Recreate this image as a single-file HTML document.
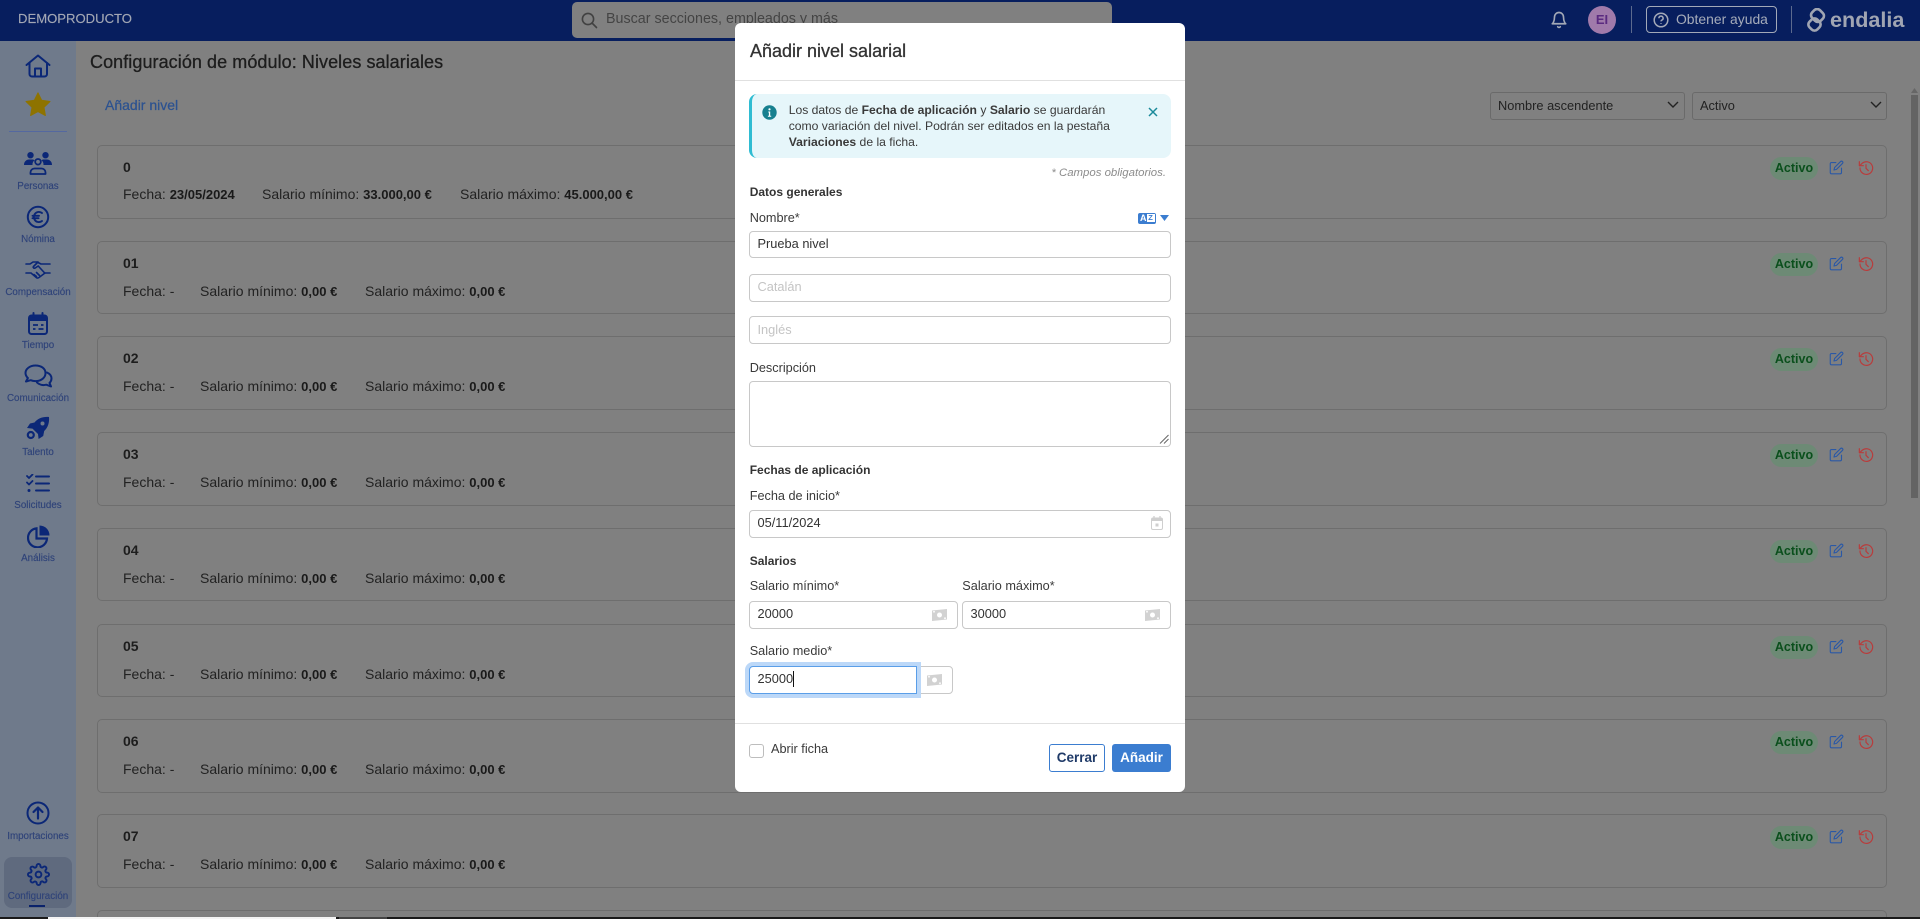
<!DOCTYPE html>
<html lang="es"><head><meta charset="utf-8"><title>Niveles salariales</title>
<style>
*{box-sizing:border-box}
html,body{margin:0;padding:0;width:1920px;height:919px;overflow:hidden;background:#808080;font-family:"Liberation Sans",sans-serif;color:#222}
#root{position:relative;width:1920px;height:919px;overflow:hidden;background:#808080}
.a{position:absolute}
.t{position:absolute;white-space:nowrap;line-height:18px;height:18px}
#hd{left:0;top:0;width:1920px;height:41px;background:#071e5e}
#sb{left:0;top:41px;width:76px;height:876px;background:#6f7a8b}
.ic{position:absolute;left:0;width:76px;display:flex;justify-content:center;align-items:center}
.lb{position:absolute;left:0;width:76px;text-align:center;font-size:9.8px;line-height:12px;color:#2f4379;white-space:nowrap;-webkit-text-stroke:.15px #2f4379;margin-top:1px}
.card{position:absolute;left:97px;width:1789.5px;height:73.7px;border:1px solid #6e6e6e;border-radius:5px}
.card .n{position:absolute;left:25px;top:13px;font-size:14px;font-weight:bold;line-height:16px;color:#1d1d1d}
.card .r{position:absolute;top:40px;font-size:14px;line-height:18px;color:#222;white-space:nowrap}
.card b{font-size:13px;color:#1a1a1a}
.pill{position:absolute;left:1672px;top:11px;width:48px;height:23px;border-radius:12px;background:#6d8a75;color:#0a4f1c;font-size:12.5px;font-weight:bold;line-height:23px;text-align:center}
.card svg{position:absolute;fill:none;stroke-width:1.8;stroke-linecap:round;stroke-linejoin:round}
.e{left:1731px;top:14px;stroke:#2a58a6}.h{left:1760px;top:14px;stroke:#b83c3c}
.sel{position:absolute;top:92.3px;height:27.4px;border:1px solid #6a6a6a;border-radius:3px;font-size:12.8px;line-height:25px;padding-left:7px;color:#222;white-space:nowrap}
.sel svg{position:absolute;top:8px;fill:none;stroke:#222;stroke-width:1.4}
#m{position:absolute;left:735px;top:23px;width:450px;height:769px;background:#fff;border-radius:6px}
.inp{position:absolute;height:27.4px;background:#fff;border:1px solid #c8c8c8;border-radius:4px;font-size:12.8px;line-height:24.5px;padding-left:7.5px;color:#333;white-space:nowrap}
.ph{color:#c4c4c4}
.lab{position:absolute;font-size:12.7px;line-height:16px;color:#3a3a3a;white-space:nowrap}
.sec{position:absolute;font-size:12px;font-weight:bold;line-height:16px;color:#333;white-space:nowrap}
</style></head><body>
<div id="root">

<div class="a" id="hd"></div>
<div class="t" style="left:18px;top:10px;font-size:13.1px;color:#a2a7b4;-webkit-text-stroke:.15px #a2a7b4">DEMOPRODUCTO</div>
<div class="a" style="left:572px;top:2px;width:540px;height:36px;background:#808080;border-radius:5px"></div>
<svg class="a" style="left:580px;top:11px" width="18" height="18" viewBox="0 0 18 18" fill="none" stroke="#414141" stroke-width="1.6"><circle cx="8" cy="8" r="5.6"/><path d="M12 12l4.500 4.500" stroke-linecap="round"/></svg>
<div class="t" style="left:606px;top:10px;font-size:14.3px;color:#444">Buscar secciones, empleados y más</div>

<svg class="a" style="left:1550px;top:10px" width="18" height="20" viewBox="0 0 24 24" fill="none" stroke="#a2a8b6" stroke-width="2.2" stroke-linecap="round" stroke-linejoin="round"><path d="M18 8A6 6 0 0 0 6 8c0 7-3 9-3 9h18s-3-2-3-9"/><path d="M13.700 21a2 2 0 0 1-3.400 0"/></svg>
<div class="a" style="left:1588px;top:6px;width:28px;height:28px;border-radius:50%;background:#a07aaa;color:#5a2a80;font-size:13px;font-weight:bold;line-height:28px;text-align:center">EI</div>
<div class="a" style="left:1631px;top:6px;width:1px;height:27px;background:#5c6a8e"></div>
<div class="a" style="left:1646px;top:6px;width:131px;height:27px;border:1px solid #a3a9b8;border-radius:4px"></div>
<svg class="a" style="left:1653px;top:12px" width="16" height="16" viewBox="0 0 16 16" fill="none" stroke="#a3a9b8" stroke-width="1.5"><circle cx="8" cy="8" r="6.800"/><path d="M5.900 6.200a2.100 2.100 0 1 1 3 1.900c-.6.300-.9.700-.9 1.300"/><path d="M8 11.200v.8"/></svg>
<div class="t" style="left:1676px;top:10px;font-size:13.9px;color:#a6acba">Obtener ayuda</div>
<div class="a" style="left:1791px;top:6px;width:1px;height:27px;background:#5c6a8e"></div>
<svg class="a" style="left:1806px;top:8px" width="24" height="24" viewBox="0 0 24 24" fill="none" stroke="#a0a5b2" stroke-width="2.600"><rect x="5.500" y="2" width="12" height="11" rx="4" transform="rotate(45 11.500 7.500)"/><rect x="3" y="11" width="11" height="11" rx="4" transform="rotate(45 8.500 16.500)"/></svg>
<div class="t" style="left:1830px;top:7px;height:26px;line-height:26px;font-size:21.600px;font-weight:bold;color:#a0a5b2">endalia</div>

<div class="a" id="sb"></div>
<div class="a" style="left:9px;top:131px;width:58px;height:1px;background:#5468a0"></div>
<div class="a" style="left:4px;top:857px;width:68px;height:51px;background:#5f6a7e;border-radius:8px"></div>
<div class="a" style="left:29px;top:905px;width:16px;height:2px;background:#0a226b"></div>

<div class="ic" style="top:53px;height:26px"><svg width="26" height="24" viewBox="0 0 26 24" fill="none" stroke="#0b2777" stroke-width="2" stroke-linejoin="round" stroke-linecap="round"><path d="M1.500 11 13 1.500 24.500 11"/><path d="M4.500 9v11a2.500 2.500 0 0 0 2.500 2.500h12.500a2.500 2.500 0 0 0 2.500-2.500V9"/><path d="M10 22.500V14.500h6v8"/></svg></div>
<div class="ic" style="top:92px;height:24px"><svg width="26" height="24" viewBox="0 0 26 24"><path d="M13 .8l3.700 7.500 8.300 1.200-6 5.800 1.400 8.200-7.400-3.900-7.400 3.900 1.400-8.200-6-5.800 8.300-1.200z" fill="#8e7300" stroke="#8e7300" stroke-linejoin="round"/></svg></div>

<div class="ic" style="top:150px;height:26px"><svg width="28" height="23" viewBox="0 0 28 23"><circle cx="6.500" cy="3.200" r="3.200" fill="#0b2777"/><circle cx="21.500" cy="3.200" r="3.200" fill="#0b2777"/><path d="M0 13c0-3.500 2.400-5.500 5-5.500h3c1 0 1.800.2 2.500.8C9.200 9.300 8.300 11 8.500 13zM28 13c0-3.500-2.400-5.500-5-5.500h-3c-1 0-1.800.2-2.500.8 1.300 1 2.200 2.700 2 4.700z" fill="#0b2777"/><circle cx="14" cy="9.800" r="2.800" fill="none" stroke="#0b2777" stroke-width="1.800"/><path d="M6.500 22v-1.500c0-2.400 1.800-4 4-4h7c2.200 0 4 1.600 4 4V22z" fill="none" stroke="#0b2777" stroke-width="1.800" stroke-linejoin="round"/></svg></div>
<div class="lb" style="top:180px">Personas</div>

<div class="ic" style="top:205px;height:24px"><svg width="24" height="24" viewBox="0 0 24 24"><circle cx="12" cy="12" r="10.200" fill="none" stroke="#0b2777" stroke-width="2"/><path d="M16 8a5 5 0 0 0-7.500 1.500 5.500 5.500 0 0 0 0 5A5 5 0 0 0 16 16M6.500 10.800h6.500M6.500 13.200h6" fill="none" stroke="#0b2777" stroke-width="1.900" stroke-linecap="round"/></svg></div>
<div class="lb" style="top:233px">Nómina</div>

<div class="ic" style="top:259px;height:20px"><svg width="26" height="19" viewBox="0 0 26 19" fill="none" stroke="#0b2777" stroke-width="1.600" stroke-linecap="round" stroke-linejoin="round"><path d="M1 4h4l3-2h4l4 2h9"/><path d="M25 13h-5l-6 4.500c-1 .7-2.200.6-3-.2L6 13H1"/><path d="M13 2 8.500 6.500c-.8.900.6 2.200 1.700 1.500l3-2 6.500 7"/><path d="M9 14.500l2.500 2M11.500 12.500l3 3"/></svg></div>
<div class="lb" style="top:286px">Compensación</div>

<div class="ic" style="top:311px;height:24px"><svg width="22" height="23" viewBox="0 0 22 23"><rect x="2" y="3.500" width="18" height="18.500" rx="2.500" fill="none" stroke="#0b2777" stroke-width="2"/><path d="M2 5.500a2.500 2.500 0 0 1 2.500-2.500h13A2.500 2.500 0 0 1 20 5.500V9H2z" fill="#0b2777"/><path d="M6.500 1v4M15.500 1v4" stroke="#0b2777" stroke-width="2" stroke-linecap="round"/><path d="M6 13h5M14 13h2.500M6 17h2.500M11.500 17h5" stroke="#0b2777" stroke-width="1.800"/></svg></div>
<div class="lb" style="top:339px">Tiempo</div>

<div class="ic" style="top:363px;height:26px"><svg width="29" height="24" viewBox="0 0 29 24" fill="none" stroke="#0b2777" stroke-width="2" stroke-linejoin="round" stroke-linecap="round"><path d="M11.500 1.500C5.800 1.500 1.500 5 1.500 9c0 1.900.9 3.600 2.400 5L2 17.500l4.700-1.300c1.400.6 3 .9 4.800.9 5.700 0 10-3.500 10-8s-4.300-7.600-10-7.600z"/><path d="M23 8.500c2.700 1.200 4.500 3.300 4.500 6 0 1.700-.7 3.200-2 4.400l1.500 3.600-4.700-1.800c-3.300.9-7.200.1-9.300-2.200"/></svg></div>
<div class="lb" style="top:392px">Comunicación</div>

<div class="ic" style="top:416px;height:24px"><svg width="24" height="24" viewBox="0 0 24 24"><path d="M23 1c-6-.5-11 1.200-14.500 5.500L4 7.500 1 12l5.500.6 5.500 5.400.6 5 4.600-3 1-5C22 11.500 23.500 6.500 23 1z" fill="#0b2777"/><circle cx="16.500" cy="7.500" r="2" fill="#6f7a8b"/><circle cx="4.800" cy="19" r="3" fill="none" stroke="#0b2777" stroke-width="2.200"/></svg></div>
<div class="lb" style="top:446px">Talento</div>

<div class="ic" style="top:473px;height:20px"><svg width="24" height="19" viewBox="0 0 24 19" fill="none" stroke="#0b2777" stroke-linecap="round" stroke-linejoin="round"><path d="M10 2.500h13M10 9.500h13M10 16.500h13" stroke-width="2"/><path d="M1 2l2 2 3.500-3.500M1 8.500l2 2 3.500-3.500" stroke-width="1.800"/><circle cx="3" cy="16.500" r="1" fill="#0b2777" stroke-width="1"/></svg></div>
<div class="lb" style="top:498.500px">Solicitudes</div>

<div class="ic" style="top:524px;height:24px"><svg width="23" height="23" viewBox="0 0 23 23"><path d="M9.500 3.400A9.500 9.500 0 1 0 20 13.500h-10.500z" fill="none" stroke="#0b2777" stroke-width="2.200"/><path d="M12.500 0.500A10 10 0 0 1 22.500 10.500H12.500z" fill="#0b2777"/></svg></div>
<div class="lb" style="top:552px">Análisis</div>

<div class="ic" style="top:801px;height:24px"><svg width="24" height="24" viewBox="0 0 24 24" fill="none" stroke="#0b2777" stroke-width="2" stroke-linecap="round" stroke-linejoin="round"><circle cx="12" cy="12" r="10.500"/><path d="M12 17.500v-11M7.500 11l4.500-4.500 4.500 4.500" stroke-width="2.200"/></svg></div>
<div class="lb" style="top:830px">Importaciones</div>

<div class="ic" style="top:862px;height:24px"><svg width="23" height="23" viewBox="0 0 24 24" fill="none" stroke="#0b2777" stroke-width="2" stroke-linecap="round" stroke-linejoin="round"><circle cx="12" cy="12" r="3"/><path d="M19.400 15a1.650 1.650 0 0 0 .33 1.820l.06.06a2 2 0 0 1 0 2.830 2 2 0 0 1-2.830 0l-.06-.06a1.650 1.650 0 0 0-1.820-.33 1.650 1.650 0 0 0-1 1.510V21a2 2 0 0 1-2 2 2 2 0 0 1-2-2v-.09A1.650 1.650 0 0 0 9 19.400a1.650 1.650 0 0 0-1.820.33l-.06.06a2 2 0 0 1-2.830 0 2 2 0 0 1 0-2.830l.06-.06a1.650 1.650 0 0 0 .33-1.820 1.650 1.650 0 0 0-1.510-1H3a2 2 0 0 1-2-2 2 2 0 0 1 2-2h.09A1.650 1.650 0 0 0 4.600 9a1.650 1.650 0 0 0-.33-1.820l-.06-.06a2 2 0 0 1 0-2.830 2 2 0 0 1 2.830 0l.06.06a1.650 1.650 0 0 0 1.820.33H9a1.650 1.650 0 0 0 1-1.510V3a2 2 0 0 1 2-2 2 2 0 0 1 2 2v.09a1.650 1.650 0 0 0 1 1.510 1.650 1.650 0 0 0 1.820-.33l.06-.06a2 2 0 0 1 2.830 0 2 2 0 0 1 0 2.830l-.06.06a1.650 1.650 0 0 0-.33 1.820V9a1.650 1.650 0 0 0 1.510 1H21a2 2 0 0 1 2 2 2 2 0 0 1-2 2h-.09a1.650 1.650 0 0 0-1.510 1z"/></svg></div>
<div class="lb" style="top:890px">Configuración</div>

<div class="t" style="left:90px;top:52px;font-size:18px;line-height:20px;height:20px;color:#1d1d1d;-webkit-text-stroke:.3px #1d1d1d;letter-spacing:.07px">Configuración de módulo: Niveles salariales</div>
<div class="t" style="left:105px;top:96px;font-size:14px;color:#2c5290;-webkit-text-stroke:.25px #2c5290">Añadir nivel</div>

<div class="sel" style="left:1490px;width:195px">Nombre ascendente<svg style="left:176px" width="12" height="8" viewBox="0 0 12 8"><path d="M1 1l5 5 5-5"/></svg></div>
<div class="sel" style="left:1692px;width:195px">Activo<svg style="left:177px" width="12" height="8" viewBox="0 0 12 8"><path d="M1 1l5 5 5-5"/></svg></div>

<div class="card" style="top:145px"><div class="n">0</div><div class="r" style="left:25px;top:39px">Fecha: <b>23/05/2024</b></div><div class="r" style="left:164px;top:39px">Salario mínimo: <b>33.000,00 €</b></div><div class="r" style="left:362px;top:39px">Salario máximo: <b>45.000,00 €</b></div><div class="pill">Activo</div><svg class="e" width="15" height="15" viewBox="0 0 24 24"><path d="M11 4H4a2 2 0 0 0-2 2v14a2 2 0 0 0 2 2h14a2 2 0 0 0 2-2v-7"/><path d="M18.500 2.500a2.120 2.120 0 0 1 3 3L12 15l-4 1 1-4z"/></svg><svg class="h" width="16" height="16" viewBox="0 0 24 24"><path d="M3 12a9.500 9.500 0 1 0 3.200-7L2.500 8.500"/><path d="M2 2.500v6h6"/><path d="M12 7v5.500l3.500 3.500"/></svg></div>
<div class="card" style="top:240.700px"><div class="n">01</div><div class="r" style="left:25px">Fecha: -</div><div class="r" style="left:102px">Salario mínimo: <b>0,00 €</b></div><div class="r" style="left:267px">Salario máximo: <b>0,00 €</b></div><div class="pill">Activo</div><svg class="e" width="15" height="15" viewBox="0 0 24 24"><path d="M11 4H4a2 2 0 0 0-2 2v14a2 2 0 0 0 2 2h14a2 2 0 0 0 2-2v-7"/><path d="M18.500 2.500a2.120 2.120 0 0 1 3 3L12 15l-4 1 1-4z"/></svg><svg class="h" width="16" height="16" viewBox="0 0 24 24"><path d="M3 12a9.500 9.500 0 1 0 3.200-7L2.500 8.500"/><path d="M2 2.500v6h6"/><path d="M12 7v5.500l3.500 3.500"/></svg></div>
<div class="card" style="top:336.400px"><div class="n">02</div><div class="r" style="left:25px">Fecha: -</div><div class="r" style="left:102px">Salario mínimo: <b>0,00 €</b></div><div class="r" style="left:267px">Salario máximo: <b>0,00 €</b></div><div class="pill">Activo</div><svg class="e" width="15" height="15" viewBox="0 0 24 24"><path d="M11 4H4a2 2 0 0 0-2 2v14a2 2 0 0 0 2 2h14a2 2 0 0 0 2-2v-7"/><path d="M18.500 2.500a2.120 2.120 0 0 1 3 3L12 15l-4 1 1-4z"/></svg><svg class="h" width="16" height="16" viewBox="0 0 24 24"><path d="M3 12a9.500 9.500 0 1 0 3.200-7L2.500 8.500"/><path d="M2 2.500v6h6"/><path d="M12 7v5.500l3.500 3.500"/></svg></div>
<div class="card" style="top:432.100px"><div class="n">03</div><div class="r" style="left:25px">Fecha: -</div><div class="r" style="left:102px">Salario mínimo: <b>0,00 €</b></div><div class="r" style="left:267px">Salario máximo: <b>0,00 €</b></div><div class="pill">Activo</div><svg class="e" width="15" height="15" viewBox="0 0 24 24"><path d="M11 4H4a2 2 0 0 0-2 2v14a2 2 0 0 0 2 2h14a2 2 0 0 0 2-2v-7"/><path d="M18.500 2.500a2.120 2.120 0 0 1 3 3L12 15l-4 1 1-4z"/></svg><svg class="h" width="16" height="16" viewBox="0 0 24 24"><path d="M3 12a9.500 9.500 0 1 0 3.200-7L2.500 8.500"/><path d="M2 2.500v6h6"/><path d="M12 7v5.500l3.500 3.500"/></svg></div>
<div class="card" style="top:527.800px"><div class="n">04</div><div class="r" style="left:25px">Fecha: -</div><div class="r" style="left:102px">Salario mínimo: <b>0,00 €</b></div><div class="r" style="left:267px">Salario máximo: <b>0,00 €</b></div><div class="pill">Activo</div><svg class="e" width="15" height="15" viewBox="0 0 24 24"><path d="M11 4H4a2 2 0 0 0-2 2v14a2 2 0 0 0 2 2h14a2 2 0 0 0 2-2v-7"/><path d="M18.500 2.500a2.120 2.120 0 0 1 3 3L12 15l-4 1 1-4z"/></svg><svg class="h" width="16" height="16" viewBox="0 0 24 24"><path d="M3 12a9.500 9.500 0 1 0 3.200-7L2.500 8.500"/><path d="M2 2.500v6h6"/><path d="M12 7v5.500l3.500 3.500"/></svg></div>
<div class="card" style="top:623.500px"><div class="n">05</div><div class="r" style="left:25px">Fecha: -</div><div class="r" style="left:102px">Salario mínimo: <b>0,00 €</b></div><div class="r" style="left:267px">Salario máximo: <b>0,00 €</b></div><div class="pill">Activo</div><svg class="e" width="15" height="15" viewBox="0 0 24 24"><path d="M11 4H4a2 2 0 0 0-2 2v14a2 2 0 0 0 2 2h14a2 2 0 0 0 2-2v-7"/><path d="M18.500 2.500a2.120 2.120 0 0 1 3 3L12 15l-4 1 1-4z"/></svg><svg class="h" width="16" height="16" viewBox="0 0 24 24"><path d="M3 12a9.500 9.500 0 1 0 3.200-7L2.500 8.500"/><path d="M2 2.500v6h6"/><path d="M12 7v5.500l3.500 3.500"/></svg></div>
<div class="card" style="top:719.200px"><div class="n">06</div><div class="r" style="left:25px">Fecha: -</div><div class="r" style="left:102px">Salario mínimo: <b>0,00 €</b></div><div class="r" style="left:267px">Salario máximo: <b>0,00 €</b></div><div class="pill">Activo</div><svg class="e" width="15" height="15" viewBox="0 0 24 24"><path d="M11 4H4a2 2 0 0 0-2 2v14a2 2 0 0 0 2 2h14a2 2 0 0 0 2-2v-7"/><path d="M18.500 2.500a2.120 2.120 0 0 1 3 3L12 15l-4 1 1-4z"/></svg><svg class="h" width="16" height="16" viewBox="0 0 24 24"><path d="M3 12a9.500 9.500 0 1 0 3.200-7L2.500 8.500"/><path d="M2 2.500v6h6"/><path d="M12 7v5.500l3.500 3.500"/></svg></div>
<div class="card" style="top:814.400px"><div class="n">07</div><div class="r" style="left:25px">Fecha: -</div><div class="r" style="left:102px">Salario mínimo: <b>0,00 €</b></div><div class="r" style="left:267px">Salario máximo: <b>0,00 €</b></div><div class="pill">Activo</div><svg class="e" width="15" height="15" viewBox="0 0 24 24"><path d="M11 4H4a2 2 0 0 0-2 2v14a2 2 0 0 0 2 2h14a2 2 0 0 0 2-2v-7"/><path d="M18.500 2.500a2.120 2.120 0 0 1 3 3L12 15l-4 1 1-4z"/></svg><svg class="h" width="16" height="16" viewBox="0 0 24 24"><path d="M3 12a9.500 9.500 0 1 0 3.200-7L2.500 8.500"/><path d="M2 2.500v6h6"/><path d="M12 7v5.500l3.500 3.500"/></svg></div>
<div class="card" style="top:910px;height:7px;border-bottom:0;border-radius:5px 5px 0 0"></div>

<svg class="a" style="left:1911px;top:88px" width="7" height="5" viewBox="0 0 7 5"><path d="M3.500 0 7 5H0z" fill="#666"/></svg>
<div class="a" style="left:1911px;top:95px;width:7px;height:403px;background:#636363"></div>

<div id="m">
 <div class="t" style="left:15px;top:17px;height:22px;line-height:22px;font-size:18px;color:#333;-webkit-text-stroke:.3px #333">Añadir nivel salarial</div>
 <div class="a" style="left:0;top:56.500px;width:450px;height:1px;background:#e0e0e0"></div>

 <div class="a" style="left:14px;top:71px;width:422px;height:64px;background:#e6f6fa;border-left:3px solid #2fbcd2;border-radius:8px"></div>
 <svg class="a" style="left:26.500px;top:81.500px" width="15" height="15" viewBox="0 0 15 15"><circle cx="7.500" cy="7.500" r="7.200" fill="#17808f"/><circle cx="7.500" cy="4.300" r="1.100" fill="#fff"/><path d="M6.300 6.500h1.900v4.200h1v1H5.900v-1h1V7.500h-.6z" fill="#fff"/></svg>
 <div class="a" style="left:53.700px;top:79px;width:340px;font-size:12.150px;line-height:16px;color:#3a3a3a;white-space:nowrap">Los datos de <b>Fecha de aplicación</b> y <b>Salario</b> se guardarán<br>como variación del nivel. Podrán ser editados en la pestaña<br><b>Variaciones</b> de la ficha.</div>
 <svg class="a" style="left:413px;top:84px" width="10" height="10" viewBox="0 0 10 10"><path d="M1 1l8 8M9 1l-8 8" stroke="#1b8a9a" stroke-width="1.500"/></svg>

 <div class="t" style="right:19px;top:141px;font-size:11.400px;font-style:italic;color:#8c8c8c">* Campos obligatorios.</div>
 <div class="sec" style="left:14.700px;top:160.500px">Datos generales</div>
 <div class="lab" style="left:14.700px;top:186.500px">Nombre*</div>
 <div class="a" style="left:403px;top:189.500px;width:18px;height:11px;background:#3b7dd0;border-radius:2px;color:#fff;font-size:9px;font-weight:bold;line-height:11px;padding-left:2px">A</div>
 <div class="a" style="left:411.500px;top:191px;width:8px;height:8px;background:#fff;color:#3b7dd0;font-size:7.500px;font-weight:bold;line-height:8px;text-align:center">Z</div>
 <svg class="a" style="left:425px;top:192px" width="9" height="6" viewBox="0 0 9 6"><path d="M0 0h9L4.500 6z" fill="#3b7dd0"/></svg>

 <div class="inp" style="left:14px;top:208px;width:422px">Prueba nivel</div>
 <div class="inp ph" style="left:14px;top:251.300px;width:422px;line-height:23.500px">Catalán</div>
 <div class="inp ph" style="left:14px;top:293.300px;width:422px;line-height:25.500px">Inglés</div>
 <div class="lab" style="left:14.700px;top:336.700px">Descripción</div>
 <div class="a" style="left:14px;top:358.300px;width:422px;height:65.500px;border:1px solid #c8c8c8;border-radius:4px"></div>
 <svg class="a" style="left:424px;top:411px" width="10" height="10" viewBox="0 0 10 10"><path d="M1 9.500 9.500 1M5 9.500 9.500 5" stroke="#666" stroke-width="1"/></svg>

 <div class="sec" style="left:14.700px;top:438.700px">Fechas de aplicación</div>
 <div class="lab" style="left:14.700px;top:464.700px">Fecha de inicio*</div>
 <div class="inp" style="left:14px;top:487.300px;width:422px;line-height:24px">05/11/2024</div>
 <svg class="a" style="left:416px;top:493px" width="12" height="14" viewBox="0 0 12 14"><rect x=".5" y="2" width="11" height="11.500" rx="1.500" fill="#fff" stroke="#cfcfcf"/><path d="M.5 2.500h11V5H.5z" fill="#cfcfcf"/><path d="M3 0v3M9 0v3" stroke="#cfcfcf" stroke-width="1.300"/><rect x="4.500" y="7.500" width="3" height="3" fill="#cfcfcf"/></svg>

 <div class="sec" style="left:14.700px;top:529.700px">Salarios</div>
 <div class="lab" style="left:14.700px;top:555px">Salario mínimo*</div>
 <div class="lab" style="left:227.300px;top:555px">Salario máximo*</div>
 <div class="inp" style="left:14px;top:578.300px;width:208.700px">20000</div>
 <div class="inp" style="left:227px;top:578.300px;width:209px">30000</div>
 <svg class="a" style="left:197px;top:586px" width="15" height="12" viewBox="0 0 15 12"><path d="M0 1.500 15 0v10.500L0 12z" fill="#d2d2d2"/><circle cx="7.500" cy="6" r="2.500" fill="#fff"/><circle cx="2" cy="2.800" r=".9" fill="#fff"/><circle cx="13" cy="9.200" r=".9" fill="#fff"/></svg>
 <svg class="a" style="left:409.700px;top:586px" width="15" height="12" viewBox="0 0 15 12"><path d="M0 1.500 15 0v10.500L0 12z" fill="#d2d2d2"/><circle cx="7.500" cy="6" r="2.500" fill="#fff"/><circle cx="2" cy="2.800" r=".9" fill="#fff"/><circle cx="13" cy="9.200" r=".9" fill="#fff"/></svg>

 <div class="lab" style="left:14.700px;top:620.300px">Salario medio*</div>
 <div class="a" style="left:170px;top:643.300px;width:48px;height:27.400px;border:1px solid #c8c8c8;border-radius:0 4px 4px 0"></div>
 <svg class="a" style="left:191.700px;top:650.500px" width="15" height="12" viewBox="0 0 15 12"><path d="M0 1.500 15 0v10.500L0 12z" fill="#d2d2d2"/><circle cx="7.500" cy="6" r="2.500" fill="#fff"/><circle cx="2" cy="2.800" r=".9" fill="#fff"/><circle cx="13" cy="9.200" r=".9" fill="#fff"/></svg>
 <div class="inp" style="left:14px;top:643.300px;width:168px;border-color:#5a9ee8;border-radius:4px 0 0 4px;box-shadow:0 0 0 4px #bcd8f8">25000</div>
 <div class="a" style="left:58.300px;top:648px;width:1px;height:16px;background:#111"></div>

 <div class="a" style="left:0;top:700px;width:450px;height:1px;background:#e0e0e0"></div>
 <div class="a" style="left:14px;top:721px;width:14.500px;height:14px;border:1px solid #bdbdbd;border-radius:3px;background:#fff"></div>
 <div class="lab" style="left:36px;top:717.700px">Abrir ficha</div>
 <div class="a" style="left:314.300px;top:721.300px;width:55.400px;height:27.400px;border:1px solid #3b7dd0;border-radius:3px;color:#1f3a68;font-size:13.500px;font-weight:bold;line-height:25px;text-align:center">Cerrar</div>
 <div class="a" style="left:377px;top:721.300px;width:59px;height:27.400px;background:#3b7dd0;border-radius:3px;color:#fff;font-size:13.500px;font-weight:bold;line-height:27px;text-align:center">Añadir</div>
</div>

<div class="a" style="left:0;top:917px;width:48px;height:2px;background:#1a1a1a"></div>
<div class="a" style="left:48px;top:917px;width:288px;height:2px;background:#f4f4f4"></div>
<div class="a" style="left:336px;top:917px;width:1584px;height:2px;background:#1a1a1a"></div>
<div class="a" style="left:339px;top:917px;width:48px;height:2px;background:#444"></div>
</div>
</body></html>
